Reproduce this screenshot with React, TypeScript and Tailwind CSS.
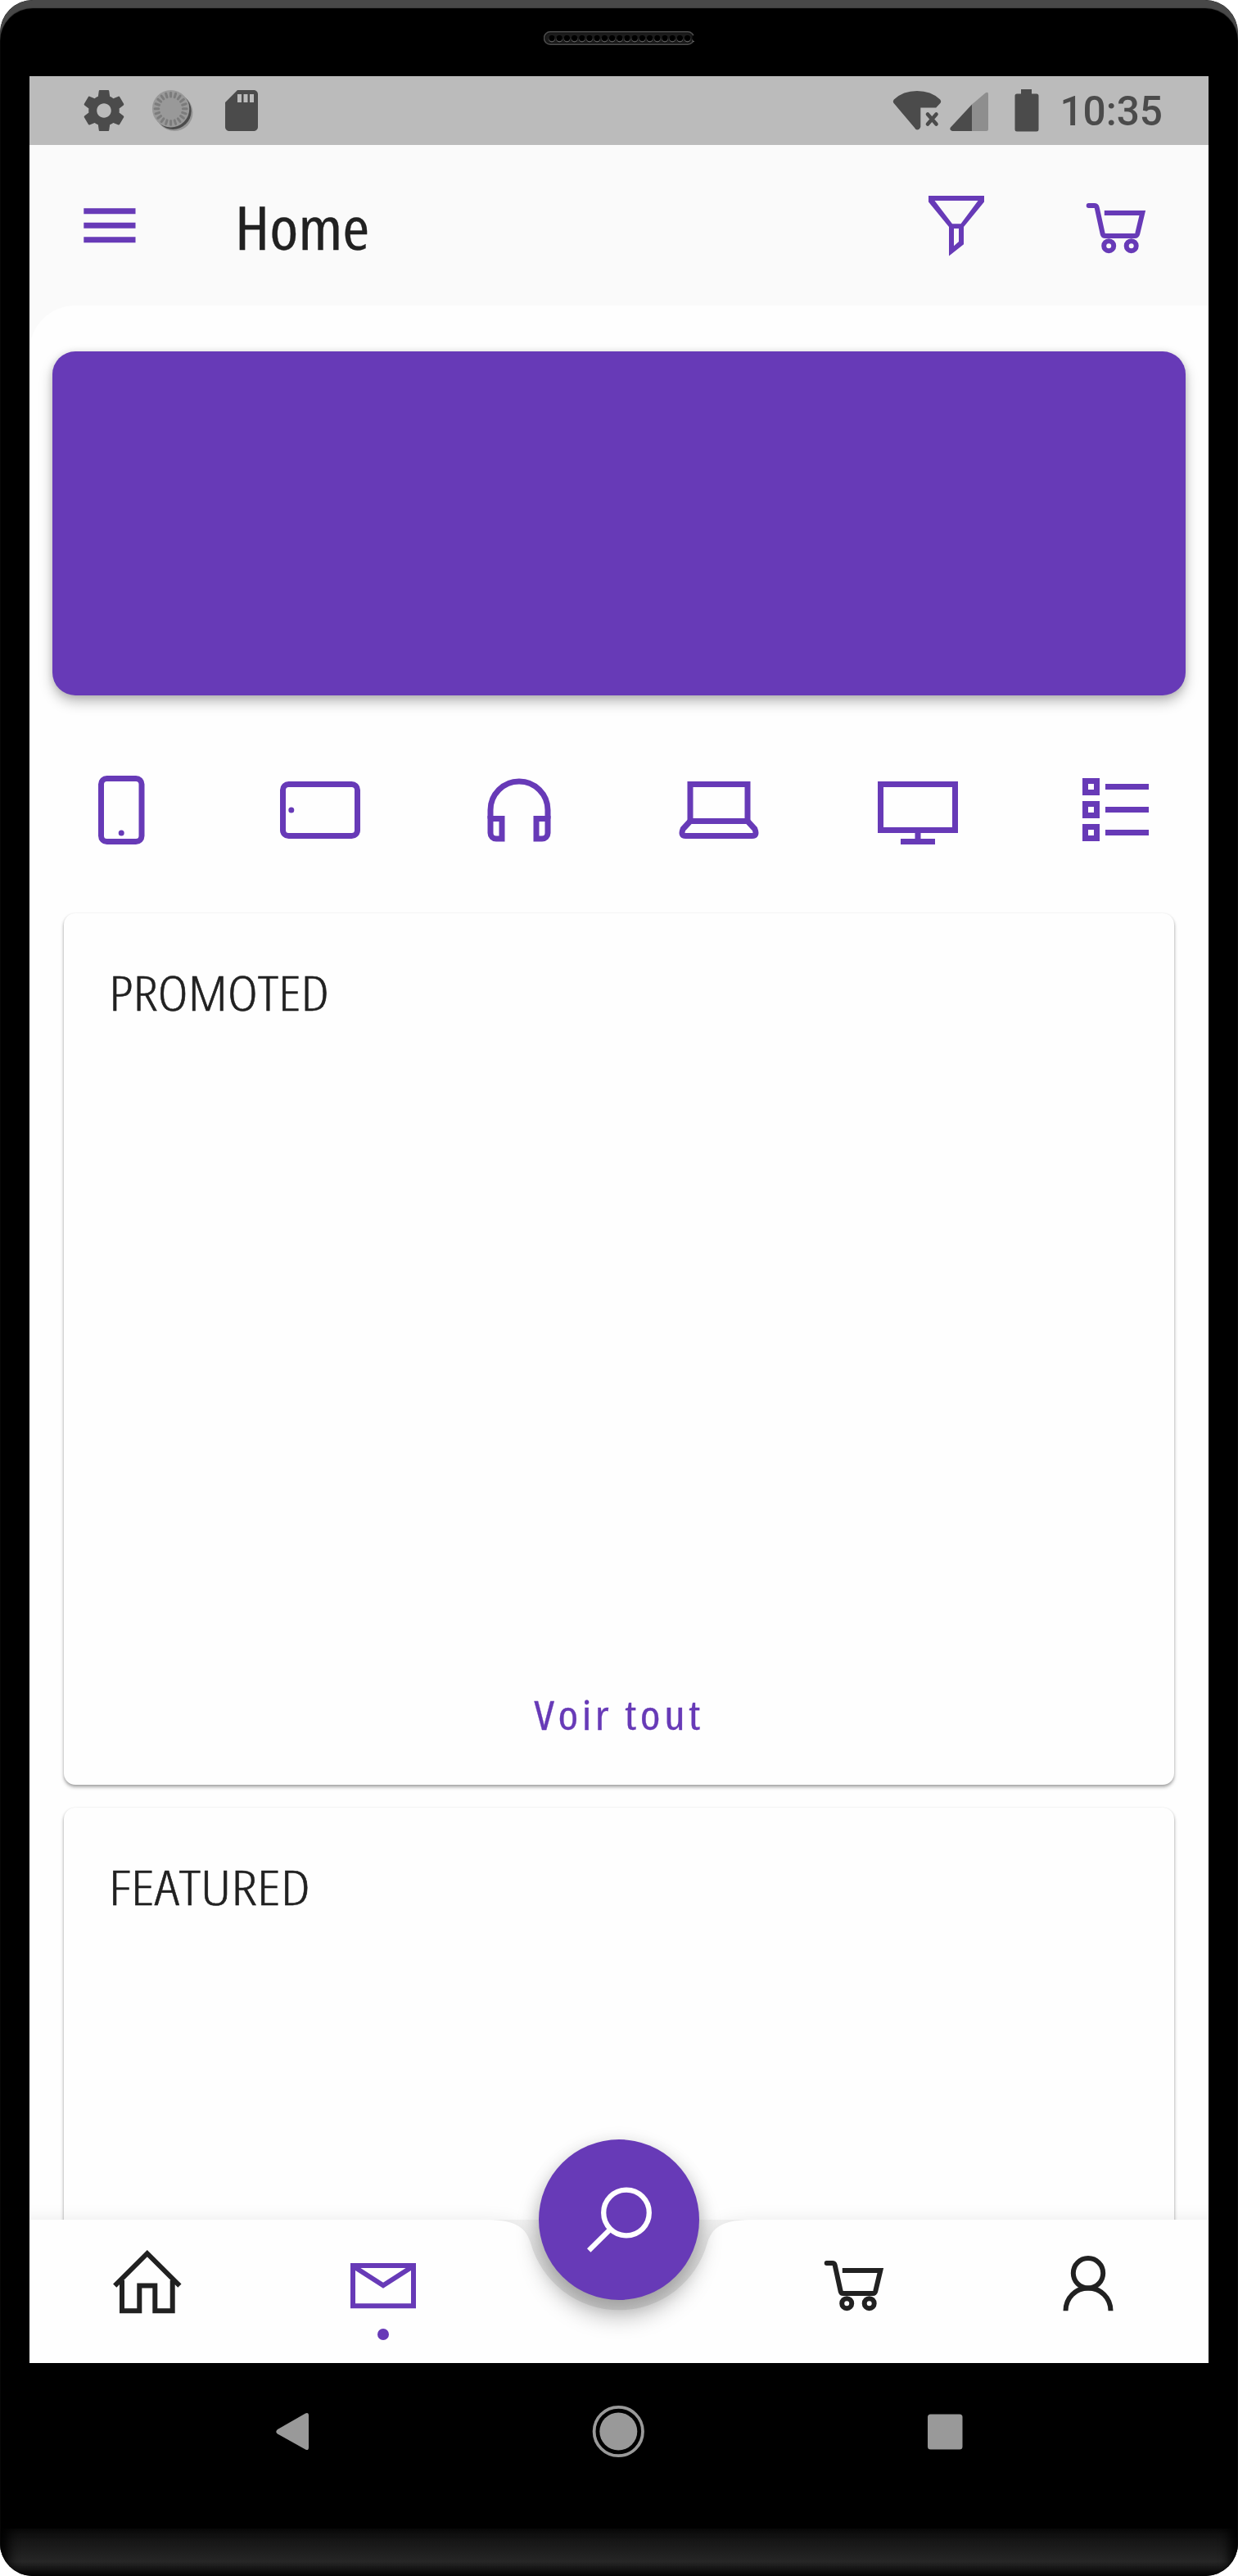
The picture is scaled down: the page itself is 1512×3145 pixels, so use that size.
import type { ReactNode } from "react";

const PURPLE = "#673ab7";
const INK = "#212121";

function Hardware() {
  const holes = Array.from({ length: 20 }, (_, i) => 10 + i * 9.2);
  return (
    <svg width="184" height="17" viewBox="0 0 184 17" className="block">
      <rect x="0.5" y="0.75" width="183" height="15.5" rx="7.5" fill="#161616" stroke="#4c4c4c" strokeWidth="1.5" />
      <rect x="3" y="3" width="178" height="11" rx="5.5" fill="#1c1c1c" />
      {holes.map((x) => (
        <g key={x}>
          <circle cx={x} cy="9.6" r="3.8" fill="#666" />
          <circle cx={x} cy="8.6" r="3.7" fill="#000" />
        </g>
      ))}
    </svg>
  );
}

function StatusBar() {
  const ticks = Array.from({ length: 20 }, (_, i) => i * 18);
  return (
    <div className="flex h-[84px] shrink-0 items-center bg-[#bbbbbb] pl-[61px] pr-[56px]">
      <svg width="60" height="60" viewBox="0 0 24 24" fill="#4b4b4b">
        <path d="M19.43 12.98c.04-.32.07-.64.07-.98s-.03-.66-.07-.98l2.11-1.65c.19-.15.24-.42.12-.64l-2-3.46c-.12-.22-.39-.3-.61-.22l-2.49 1c-.52-.4-1.08-.73-1.69-.98l-.38-2.65C14.46 2.18 14.25 2 14 2h-4c-.25 0-.46.18-.49.42l-.38 2.65c-.61.25-1.17.59-1.69.98l-2.49-1c-.23-.09-.49 0-.61.22l-2 3.46c-.13.22-.07.49.12.64l2.11 1.65c-.04.32-.07.65-.07.98s.03.66.07.98l-2.11 1.65c-.19.15-.24.42-.12.64l2 3.46c.12.22.39.3.61.22l2.49-1c.52.4 1.08.73 1.69.98l.38 2.65c.03.24.24.42.49.42h4c.25 0 .46-.18.49-.42l.38-2.65c.61-.25 1.17-.59 1.69-.98l2.49 1c.23.09.49 0 .61-.22l2-3.46c.12-.22.07-.49-.12-.64l-2.11-1.65zM12 15.5c-1.93 0-3.5-1.57-3.5-3.5s1.57-3.5 3.5-3.5 3.5 1.57 3.5 3.5-1.57 3.5-3.5 3.5z" />
      </svg>
      <svg width="60" height="60" viewBox="0 0 60 60" className="ml-6">
        <circle cx="32" cy="32.5" r="22.5" fill="#969696" />
        <circle cx="30.3" cy="30.6" r="22.3" fill="#4b4b4b" />
        <circle cx="27.6" cy="27.8" r="22.7" fill="#999" />
        {ticks.map((a) => (
          <path
            key={a}
            d="M27.6 8.3V13"
            stroke="#7c7c7c"
            strokeWidth="3"
            strokeLinecap="round"
            transform={`rotate(${a} 27.6 27.8)`}
          />
        ))}
      </svg>
      <svg width="60" height="60" viewBox="0 0 24 24" fill="#4b4b4b" className="ml-6">
        <path d="M18 2h-8L4.02 8 4 20c0 1.1.9 2 2 2h12c1.1 0 2-.9 2-2V4c0-1.1-.9-2-2-2zm-6 6h-2V4h2v4zm3 0h-2V4h2v4zm3 0h-2V4h2v4z" />
      </svg>
      <div className="ml-auto flex items-center">
        <svg width="60" height="50" viewBox="0 0 60 50" fill="#4b4b4b">
          <path d="M1.2 15.5Q0 13.3 1.8 11.4Q13 1 30 1T58.2 11.4Q60 13.3 58.8 15.5L53.2 21.5H34.3V45Q33 48.6 30 48.6Q28 48.3 27 46Z" />
          <path d="M43 29.5 53.5 41.5M53.5 29.5 43 41.5" stroke="#4b4b4b" strokeWidth="4.6" strokeLinecap="round" />
        </svg>
        <svg width="48" height="50" viewBox="0 0 48 50" className="ml-[10px]">
          <path d="M1 45.5 27 17.5V50H3Q-1 49 1 45.5Z" fill="#4b4b4b" />
          <path d="M27 17.5 43.5 3.6Q47 1.5 47 5V47.5Q47 50 44.5 50H27Z" fill="#8e8e8e" />
        </svg>
        <svg width="30" height="52" viewBox="0 0 30 52" fill="#4b4b4b" className="ml-[31px]">
          <path d="M8 0H21V5.5H27Q29.5 5.5 29.5 8V49Q29.5 51.5 27 51.5H3Q.5 51.5 .5 49V8Q.5 5.5 3 5.5H8Z" />
        </svg>
        <span className="ml-[25px] mt-1 font-['Roboto'] text-[49.5px] font-medium leading-none text-[#4b4b4b]">10:35</span>
      </div>
    </div>
  );
}

function Cart({ color }: { color: string }) {
  return (
    <svg width="84" height="84" viewBox="0 0 84 84" fill="none" stroke={color} strokeWidth="6">
      <path d="M7.7 15H14.3Q17.2 15 17.7 17.5L24.7 49.5Q25.3 52 28 52H64Q66.5 52 67.2 49.5L73.3 24H26.8" />
      <path d="M7.7 15H12" strokeLinecap="round" />
      <circle cx="32.2" cy="64.2" r="6" />
      <circle cx="59.7" cy="64.2" r="6" />
    </svg>
  );
}

function Toolbar() {
  return (
    <div className="flex h-[196px] shrink-0 items-center bg-[#fafafa] pl-[56px] pr-[70px]">
      <svg width="84" height="84" viewBox="0 0 84 84" fill={PURPLE}>
        <path d="M10.3 21.2h63.2v7H10.3zM10.3 38.7h63.2v7H10.3zM10.3 56.2h63.2v7H10.3z" />
      </svg>
      <h1 className="ml-[111px] mt-0.5 origin-left scale-x-[1.095] font-['Open_Sans'] text-[73px] leading-none text-[#212121] [-webkit-text-stroke:0.3px_#212121] [font-stretch:75%]">
        Home
      </h1>
      <div className="ml-auto mt-1.5 flex gap-[112px]">
        <svg width="84" height="84" viewBox="0 0 84 84" fill={PURPLE} fillRule="evenodd">
          <path d="M8 3H76V10.5L51 41V62.3L33 76.5V41L8 10.5ZM15.5 9H68.5L47.5 37.3H37ZM39 43H45V59L39 64.3Z" />
        </svg>
        <Cart color={PURPLE} />
      </div>
    </div>
  );
}

function CategoryIcon({ children }: { children: ReactNode }) {
  return (
    <svg width="112" height="112" viewBox="0 0 112 112" fill="none" stroke={PURPLE} strokeWidth="7">
      {children}
    </svg>
  );
}

function Categories() {
  return (
    <div className="mt-[84px] flex justify-between px-14">
      <CategoryIcon>
        <rect x="31.5" y="17.5" width="49.5" height="77" rx="7" />
        <circle cx="56.2" cy="84" r="3.5" fill={PURPLE} stroke="none" />
      </CategoryIcon>
      <CategoryIcon>
        <rect x="10.5" y="24.5" width="91" height="63" rx="7" />
        <circle cx="20.8" cy="56" r="3.5" fill={PURPLE} stroke="none" />
      </CategoryIcon>
      <CategoryIcon>
        <path d="M21 66.5V56a35 35 0 0 1 70 0V66.5" />
        <path d="M21 66.5H35V91H28a7 7 0 0 1-7-7ZM91 66.5H77V91H84a7 7 0 0 0 7-7Z" />
      </CategoryIcon>
      <CategoryIcon>
        <path d="M21 24.5H91V69.5H21Z" />
        <path d="M21 69.5 12.2 79Q8.7 87.5 15.5 87.5H96.5Q103.3 87.5 99.8 79L91 69.5" />
      </CategoryIcon>
      <CategoryIcon>
        <path d="M10.5 24.5H101.5V80.5H10.5ZM56 80.5V94.5M35 94.5H77" />
      </CategoryIcon>
      <CategoryIcon>
        <path d="M17.5 20.5h14v14h-14zM17.5 48.5h14v14h-14zM17.5 76.5h14v14h-14zM42 27.5H95M42 55.5H95M42 83.5H95" />
      </CategoryIcon>
    </div>
  );
}

function Card({ title, titleClass, children }: { title: string; titleClass: string; children?: ReactNode }) {
  return (
    <section className="flex h-[1064px] shrink-0 flex-col rounded-[14px] bg-[#fefefe] pt-[61px] shadow-[0_3px_4px_rgba(0,0,0,0.3),0_1px_3px_rgba(0,0,0,0.14)]">
      <h2
        className={`origin-left font-['Open_Sans'] text-[59px] font-light leading-[70px] text-[#212121] [-webkit-text-stroke:0.5px_#212121] [font-stretch:75%] ${titleClass}`}
      >
        {title}
      </h2>
      {children}
    </section>
  );
}

function BottomNav() {
  return (
    <nav className="absolute inset-x-0 bottom-0 h-[175px]">
      <svg width="1440" height="175" viewBox="0 0 1440 175" className="absolute inset-0 overflow-visible">
        <defs>
          <filter id="lift" x="-5%" y="-40%" width="110%" height="180%">
            <feGaussianBlur stdDeviation="13" />
          </filter>
        </defs>
        <path
          d="M-60 4H554C589 4 605 10 612 32A112 112 0 0 0 828 32C835 10 851 4 886 4H1500V240H-60Z"
          fill="#000"
          opacity="0.1"
          filter="url(#lift)"
        />
        <path d="M540 0H900V60C850 140 590 140 540 60Z" fill="#000" opacity="0.04" />
        <path d="M0 0H554C589 0 605 6 612 28A112 112 0 0 0 828 28C835 6 851 0 886 0H1440V175H0Z" fill="#fefefe" />
      </svg>
      <div className="relative flex h-full">
        <div className="flex w-[288px] justify-center pt-[38px]">
          <svg width="84" height="84" viewBox="0 0 84 84" fill="none" stroke={INK} strokeWidth="6" className="overflow-visible">
            <path d="M2.2 42.6 41.8 3.2 81.4 42.6M11 36V73.2H32.3V42.6H51.3V73.2H72.7V36" />
          </svg>
        </div>
        <div className="flex w-[288px] flex-col items-center pt-[38px]">
          <svg width="84" height="84" viewBox="0 0 84 84" fill="none" stroke={PURPLE} strokeWidth="6">
            <path d="M5 18H79V67.2H5ZM5 18.5 42 42.3 79 18.5" />
          </svg>
          <span className="mt-[11px] size-3.5 rounded-full bg-[#673ab7]" />
        </div>
        <div className="w-[288px]" />
        <div className="flex w-[288px] justify-center pt-[38px]">
          <Cart color={INK} />
        </div>
        <div className="flex w-[288px] justify-center pt-[38px]">
          <svg width="84" height="84" viewBox="0 0 84 84" fill="none" stroke={INK} strokeWidth="6">
            <circle cx="39" cy="27.3" r="18.2" />
            <path d="M11.5 73.2C11.5 57 24 45.5 39 45.5S66.5 57 66.5 73.2" />
          </svg>
        </div>
      </div>
      <button className="absolute left-[622px] top-[-98px] flex size-[196px] items-center justify-center rounded-full bg-[#673ab7] shadow-[0_20px_28px_rgba(0,0,0,0.27),0_4px_22px_rgba(0,0,0,0.14)]">
        <svg width="84" height="84" viewBox="0 0 84 84" fill="none" stroke="#fff" strokeWidth="6.3">
          <circle cx="51" cy="33.5" r="27.8" />
          <path d="M31.5 53.5 5.2 79.5" />
        </svg>
      </button>
    </nav>
  );
}

function SystemKeys() {
  return (
    <div className="flex h-[168px] items-center justify-between px-[315px]">
      <svg width="84" height="84" viewBox="0 0 84 84" fill="#999">
        <path d="M58 19.5Q62 18 62 22V61Q62 65.5 58 63.5L24 44.5Q20.5 42 24 39Z" />
      </svg>
      <svg width="84" height="84" viewBox="0 0 84 84">
        <circle cx="41.3" cy="41.5" r="29.7" fill="none" stroke="#999" strokeWidth="3.8" />
        <circle cx="41.3" cy="41.5" r="23" fill="#999" />
      </svg>
      <svg width="84" height="84" viewBox="0 0 84 84" fill="#999">
        <rect x="20" y="20.5" width="42.5" height="43" rx="3.5" />
      </svg>
    </div>
  );
}

export default function App() {
  return (
    <div className="relative flex h-[3145px] w-[1512px] flex-col overflow-hidden rounded-[40px] bg-black">
      <div className="absolute inset-0 rounded-[40px] shadow-[inset_0_10px_1px_#484848]" />
      <header className="flex h-[93px] shrink-0 justify-center pt-[38px]">
        <Hardware />
      </header>

      <main className="relative mx-9 flex h-[2792px] shrink-0 flex-col overflow-hidden bg-[#fafafa]">
        <StatusBar />
        <Toolbar />
        <div className="flex grow flex-col overflow-hidden rounded-tl-[56px] bg-[#fefefe] pt-14">
          <div className="mx-7 h-[420px] shrink-0 rounded-[28px] bg-[#673ab7] shadow-[0_8px_16px_rgba(0,0,0,0.26),0_1px_8px_rgba(0,0,0,0.12)]" />
          <Categories />
          <div className="mx-[42px] mt-[70px] flex flex-col gap-7">
            <Card title="PROMOTED" titleClass="scale-x-[1.2] pl-[46px]">
              <button className="mx-auto mb-[51px] mt-auto scale-x-[1.125] pl-px font-['Open_Sans'] text-[50px] leading-[70px] tracking-[4px] text-[#673ab7] [-webkit-text-stroke:0.3px_#673ab7] [font-stretch:75%]">
                Voir tout
              </button>
            </Card>
            <Card title="FEATURED" titleClass="scale-x-[1.26] pl-[43.500px]" />
          </div>
        </div>
        <BottomNav />
      </main>

      <SystemKeys />
      <footer className="mt-auto h-[58px] bg-linear-to-b from-[#0d0d0d] via-[#262626] via-70% to-[#080808] shadow-[inset_14px_0_14px_-4px_#000,inset_-14px_0_14px_-4px_#000]" />
    </div>
  );
}
